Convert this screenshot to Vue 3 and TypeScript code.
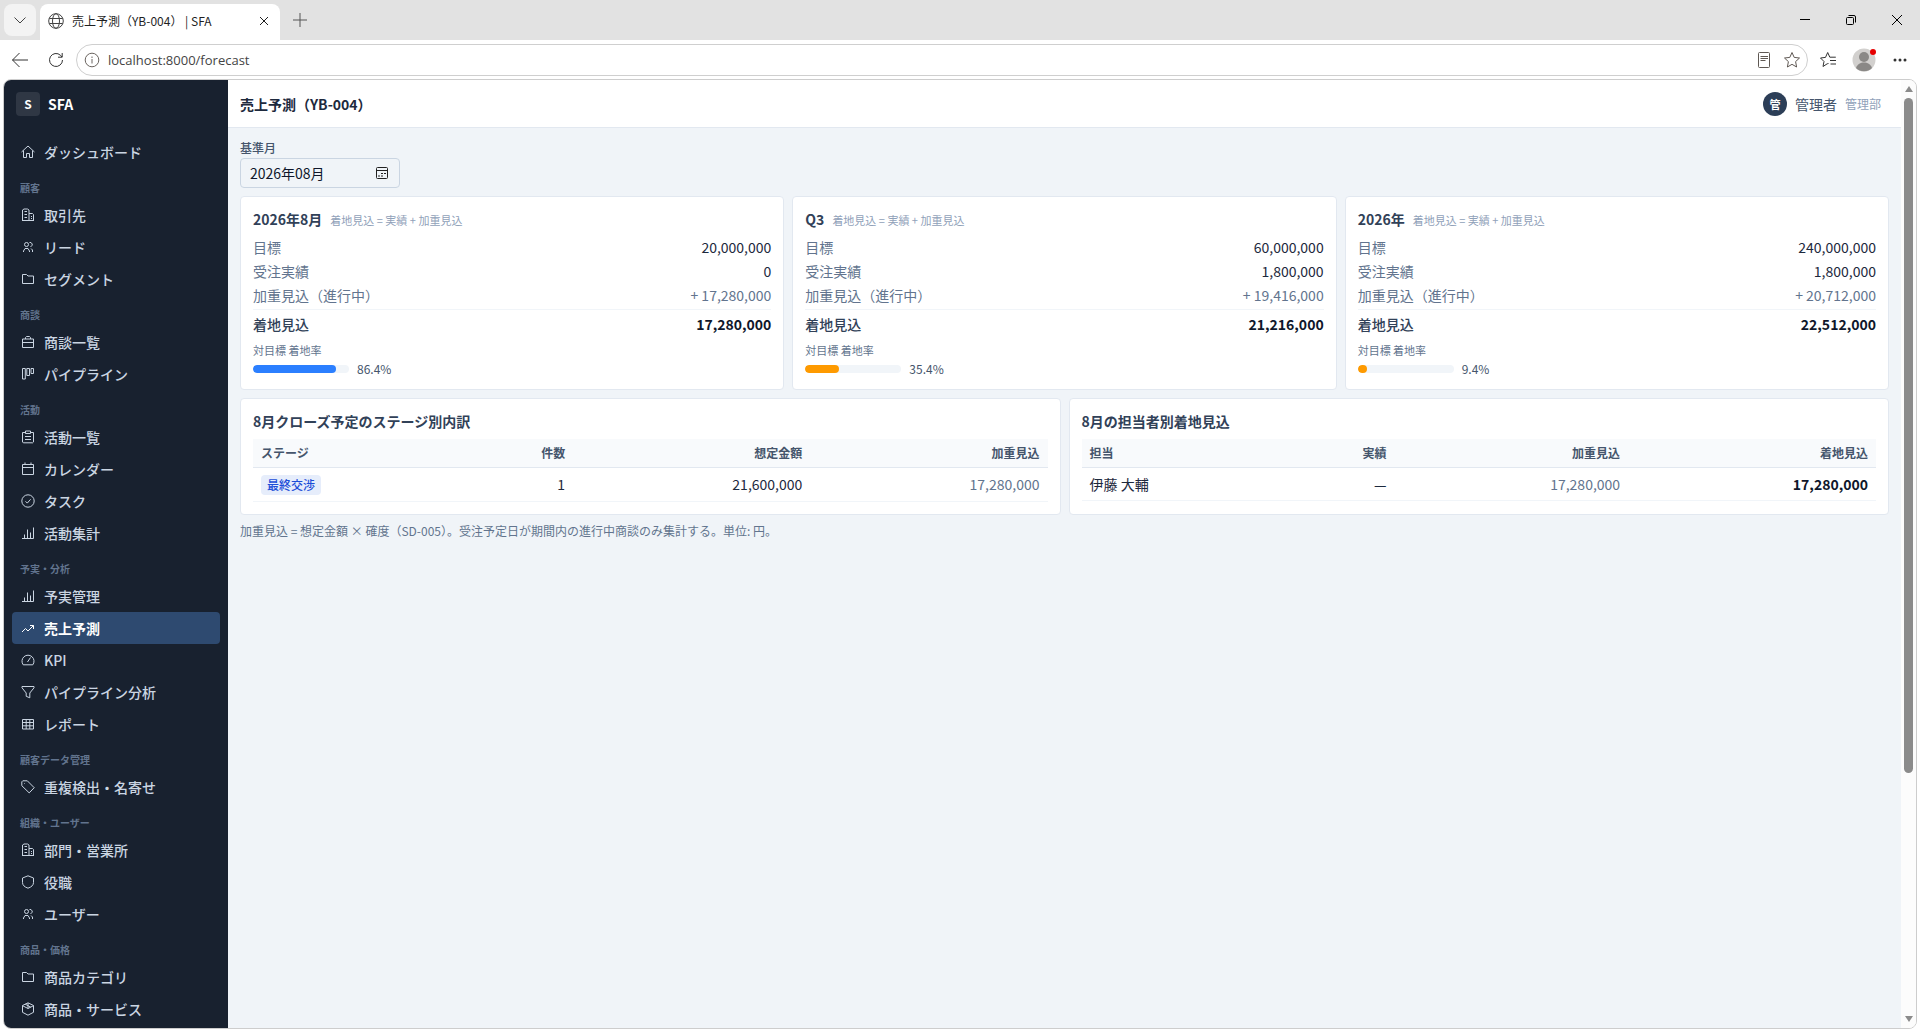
<script setup lang="ts">
import { ref } from 'vue'

type IconName =
  | 'home' | 'building' | 'users' | 'folder' | 'briefcase' | 'kanban' | 'clipboard' | 'calendar'
  | 'check' | 'chart' | 'trend' | 'gauge' | 'funnel' | 'table' | 'tag' | 'shield' | 'cube'

interface NavItem { label: string; icon: IconName; active?: boolean }
interface NavGroup { title?: string; items: NavItem[] }
interface Period {
  name: string
  target: string
  actual: string
  weighted: string
  landing: string
  rate: number
  tone: 'blue' | 'amber'
}

const icons: Record<IconName, string> = {
  home: 'M1.5 8 8 2l6.500 6M3.500 6.500v7h3V9.500h3v4h3v-7',
  building: 'M2.500 13.500V3L4 2h3.500L9 3v10.500M9 6.500h3.500l1 1v6M2 13.500h12M4.500 4.500H7M4.500 7.500H7M4.500 10.500H7M11 9.500h1M11 11.500h1',
  users: 'M6.500 7.500a2 2 0 1 0 0-4 2 2 0 0 0 0 4ZM3.500 13v-1l1.500-2.500h3L9.500 12v1M9.500 3.500h1.500l1.200 1.500v1.200L10.500 8M11 9.500l1.500 1.500v2',
  folder: 'M2.500 12.500v-9h4L8 5h5.500v7.500z',
  briefcase: 'M2.500 5h11v8.500h-11zM5.500 5V3.500l1-1h3l1 1V5M2.500 8.500h11',
  kanban: 'M2.500 2.500h2.800v10.500H2.500zM6.800 2.500h2.700v7H6.800zM11 2.500h2.500v5H11z',
  clipboard: 'M5.500 3.500h-3V13l.8.800h9.400l.8-.8V3.500h-3M5.500 2h5v2.500h-5zM5 7.500h6M5 10.500h6',
  calendar: 'M2.500 3.500h11v10h-11zM2.500 6.500h11M5 1.500v2M11 1.500v2',
  check: 'M14.200 8A6.200 6.200 0 1 1 1.800 8a6.200 6.200 0 0 1 12.400 0ZM5.500 8.300l1.800 1.800 3.300-3.800',
  chart: 'M2 13.500h11.500V2.500M4.500 13.500v-4M7.500 13.500v-9M10.500 13.500v-6',
  trend: 'M2 12 5.500 8.500l2.500 2.500 5.500-5.500M10 5.500h3.500V9',
  gauge: 'M3.200 12.800A6 6 0 1 1 12.800 12.800zM7.500 10l3-4.500',
  funnel: 'M2 2.500h12v1.300L9.800 9v4.800l-3.600-1.500V9L2 3.800z',
  table: 'M2.500 3.500h11v9.500h-11zM2.500 6.500h11M2.500 9.800h11M6.200 3.500V13M9.800 3.500V13',
  tag: 'M1.800 2.800 2.800 1.800h4.500l6.900 6.900-5 5.200L1.800 6.700zM4.300 4.500h.600',
  shield: 'M8 1.800 13.500 4v4.500c0 2.700-2 4.500-5.500 5.700-3.500-1.200-5.500-3-5.500-5.700V4z',
  cube: 'M8 1.800 13.500 4.500v6.800L8 14.200l-5.500-2.900V4.500zM2.500 4.700 8 7.500l5.500-2.800M8 2v5.500M5.200 3.200l5.500 2.900',
}

const navGroups: NavGroup[] = [
  { items: [{ label: 'ダッシュボード', icon: 'home' }] },
  {
    title: '顧客',
    items: [
      { label: '取引先', icon: 'building' },
      { label: 'リード', icon: 'users' },
      { label: 'セグメント', icon: 'folder' },
    ],
  },
  {
    title: '商談',
    items: [
      { label: '商談一覧', icon: 'briefcase' },
      { label: 'パイプライン', icon: 'kanban' },
    ],
  },
  {
    title: '活動',
    items: [
      { label: '活動一覧', icon: 'clipboard' },
      { label: 'カレンダー', icon: 'calendar' },
      { label: 'タスク', icon: 'check' },
      { label: '活動集計', icon: 'chart' },
    ],
  },
  {
    title: '予実・分析',
    items: [
      { label: '予実管理', icon: 'chart' },
      { label: '売上予測', icon: 'trend', active: true },
      { label: 'KPI', icon: 'gauge' },
      { label: 'パイプライン分析', icon: 'funnel' },
      { label: 'レポート', icon: 'table' },
    ],
  },
  { title: '顧客データ管理', items: [{ label: '重複検出・名寄せ', icon: 'tag' }] },
  {
    title: '組織・ユーザー',
    items: [
      { label: '部門・営業所', icon: 'building' },
      { label: '役職', icon: 'shield' },
      { label: 'ユーザー', icon: 'users' },
    ],
  },
  {
    title: '商品・価格',
    items: [
      { label: '商品カテゴリ', icon: 'folder' },
      { label: '商品・サービス', icon: 'cube' },
    ],
  },
]

const periods: Period[] = [
  { name: '2026年8月', target: '20,000,000', actual: '0', weighted: '17,280,000', landing: '17,280,000', rate: 86.4, tone: 'blue' },
  { name: 'Q3', target: '60,000,000', actual: '1,800,000', weighted: '19,416,000', landing: '21,216,000', rate: 35.4, tone: 'amber' },
  { name: '2026年', target: '240,000,000', actual: '1,800,000', weighted: '20,712,000', landing: '22,512,000', rate: 9.4, tone: 'amber' },
]

const address = ref('localhost:8000/forecast')
const baseMonth = ref('2026年08月')
</script>

<template>
  <div class="browser">
    <div class="tabstrip">
      <button class="tab-search" aria-label="タブを検索">
        <svg width="14" height="14" viewBox="0 0 14 14"><path d="M1.500 4.500 7 10l5.500-5.500" /></svg>
      </button>
      <div class="tab">
        <svg class="globe" width="16" height="16" viewBox="0 0 16 16">
          <circle cx="8" cy="8" r="7.300" />
          <ellipse cx="8" cy="8" rx="3.500" ry="7.300" />
          <path d="M1.300 5.500h13.400M1.300 10.500h13.400" />
        </svg>
        <span class="tab-title">売上予測（YB-004） | SFA</span>
        <button class="tab-close" aria-label="タブを閉じる">
          <svg width="10" height="10" viewBox="0 0 10 10"><path d="m1 1 8 8M9 1 1 9" /></svg>
        </button>
      </div>
      <button class="new-tab" aria-label="新しいタブ">
        <svg width="16" height="16" viewBox="0 0 16 16"><path d="M8 1v14M1 8h14" /></svg>
      </button>
      <div class="window-controls">
        <button aria-label="最小化"><svg width="12" height="12" viewBox="0 0 12 12"><path d="M1 5.500h10" /></svg></button>
        <button aria-label="元に戻す">
          <svg width="12" height="12" viewBox="0 0 12 12"><rect x="1.500" y="3.500" width="7" height="7" rx="1" /><path d="M3.500 1.500h5.500a1.500 1.500 0 0 1 1.500 1.500v5.500" /></svg>
        </button>
        <button aria-label="閉じる"><svg width="12" height="12" viewBox="0 0 12 12"><path d="m1 1 10 10M11 1 1 11" /></svg></button>
      </div>
    </div>

    <div class="toolbar">
      <button aria-label="戻る"><svg width="18" height="16" viewBox="0 0 18 16"><path d="M8.500 1 1.500 8l7 7M1.500 8H17" /></svg></button>
      <button aria-label="更新">
        <svg width="16" height="16" viewBox="0 0 16 16"><path d="M14.500 8a6.500 6.500 0 1 1-2-4.700L14 5M14.200 1v4.200H10" /></svg>
      </button>
      <div class="address">
        <svg class="info" width="16" height="16" viewBox="0 0 16 16"><circle cx="8" cy="8" r="6.800" /><path d="M8 7v4.500M8 4.500V6" /></svg>
        <input v-model="address" class="address-input" type="text" aria-label="アドレス" />
        <button aria-label="リーダー">
          <svg width="14" height="18" viewBox="0 0 14 18"><rect x="1.500" y="1.500" width="11" height="15" rx="1" /><path d="M3.500 5.500h7.500M3.500 7.500h7.500M3.500 9.500h5" /></svg>
        </button>
        <button aria-label="お気に入りに追加">
          <svg width="18" height="18" viewBox="0 0 18 18"><path d="m9 1.500 2.200 4.900 5.300.6-3.900 3.600 1 5.400L9 13.300 4.400 16l1-5.400L1.500 7l5.300-.6z" /></svg>
        </button>
      </div>
      <button aria-label="お気に入り">
        <svg width="18" height="18" viewBox="0 0 18 18"><path d="M9.500 12.500 8.200 12.800 4 15.500l1-5L1.500 7l5-.6L8.700 1.500l2.100 4.700h6M11 9.500h6M11.500 13h5.500" /></svg>
      </button>
      <button class="profile" aria-label="プロファイル">
        <svg width="24" height="24" viewBox="0 0 24 24">
          <circle cx="12" cy="12" r="11.500" class="face-bg" />
          <circle cx="12" cy="9" r="5" class="face" />
          <path d="M4 20c1.500-4 4.500-5.500 8-5.500s6.500 1.500 8 5.500a11.500 11.500 0 0 1-16 0Z" class="face" />
        </svg>
        <span class="profile-dot"></span>
      </button>
      <button aria-label="設定など">
        <svg width="16" height="16" viewBox="0 0 16 16" class="dots"><circle cx="3" cy="8" r="1.500" /><circle cx="8" cy="8" r="1.500" /><circle cx="13" cy="8" r="1.500" /></svg>
      </button>
    </div>

    <div class="viewport">
      <aside class="sidebar">
        <div class="brand"><span class="brand-mark">S</span><span>SFA</span></div>
        <nav>
          <template v-for="(group, gi) in navGroups" :key="gi">
            <h2 v-if="group.title" class="nav-title">{{ group.title }}</h2>
            <a
              v-for="item in group.items"
              :key="item.label"
              href="#"
              class="nav-item"
              :class="{ active: item.active }"
            >
              <svg width="16" height="16" viewBox="0 0 16 16"><path :d="icons[item.icon]" /></svg>
              <span>{{ item.label }}</span>
            </a>
          </template>
        </nav>
      </aside>

      <div class="page">
        <header class="topbar">
          <h1>売上予測（YB-004）</h1>
          <div class="user">
            <span class="avatar">管</span>
            <span class="user-name">管理者</span>
            <span class="user-dept">管理部</span>
          </div>
        </header>

        <main>
          <div class="field">
            <label for="base-month">基準月</label>
            <div class="month">
              <input id="base-month" v-model="baseMonth" type="text" />
              <button aria-label="月を選択">
                <svg width="14" height="14" viewBox="0 0 14 14">
                  <rect x="1.500" y="1.500" width="11" height="11" rx="1" />
                  <path d="M1.500 4.500h11M6 7.500h2M9 7.500h2M3 10h2M6 10h2" />
                </svg>
              </button>
            </div>
          </div>

          <div class="periods">
            <section v-for="p in periods" :key="p.name" class="card">
              <h2>{{ p.name }}<small>着地見込 = 実績 + 加重見込</small></h2>
              <dl>
                <div><dt>目標</dt><dd>{{ p.target }}</dd></div>
                <div><dt>受注実績</dt><dd>{{ p.actual }}</dd></div>
                <div class="weighted"><dt>加重見込（進行中）</dt><dd>+ {{ p.weighted }}</dd></div>
                <div class="landing"><dt>着地見込</dt><dd>{{ p.landing }}</dd></div>
              </dl>
              <p class="rate-label">対目標 着地率</p>
              <div class="rate">
                <span class="track"><span class="fill" :class="p.tone" :style="{ width: p.rate + '%' }"></span></span>
                <span>{{ p.rate }}%</span>
              </div>
            </section>
          </div>

          <div class="breakdowns">
            <section class="card">
              <h2>8月クローズ予定のステージ別内訳</h2>
              <table>
                <thead>
                  <tr><th>ステージ</th><th>件数</th><th>想定金額</th><th>加重見込</th></tr>
                </thead>
                <tbody>
                  <tr>
                    <td><span class="badge">最終交渉</span></td>
                    <td>1</td>
                    <td>21,600,000</td>
                    <td class="muted">17,280,000</td>
                  </tr>
                </tbody>
              </table>
            </section>
            <section class="card">
              <h2>8月の担当者別着地見込</h2>
              <table>
                <thead>
                  <tr><th>担当</th><th>実績</th><th>加重見込</th><th>着地見込</th></tr>
                </thead>
                <tbody>
                  <tr>
                    <td>伊藤 大輔</td>
                    <td>—</td>
                    <td class="muted">17,280,000</td>
                    <td class="strong">17,280,000</td>
                  </tr>
                </tbody>
              </table>
            </section>
          </div>

          <p class="note">加重見込 = 想定金額 × 確度（SD-005）。受注予定日が期間内の進行中商談のみ集計する。単位: 円。</p>
        </main>
      </div>

      <div class="scrollbar" aria-hidden="true">
        <svg width="10" height="8" viewBox="0 0 10 8"><path d="M5 1 9 7H1z" /></svg>
        <div class="scroll-track"><div class="thumb"></div></div>
        <svg width="10" height="8" viewBox="0 0 10 8"><path d="M5 7 9 1H1z" /></svg>
      </div>
    </div>
  </div>
</template>

<style>
body {
  margin: 0;
  background: #fff;
}
</style>

<style scoped>
* {
  box-sizing: border-box;
}

.browser {
  display: flex;
  flex-direction: column;
  height: 100vh;
  background: #fff;
  color: #1d293d;
  font-family: 'Noto Sans CJK JP', 'Noto Sans', sans-serif;
  font-size: 14px;
  line-height: 20px;
}

h1,
h2,
p,
dl,
dd {
  margin: 0;
}

button {
  display: flex;
  align-items: center;
  justify-content: center;
  padding: 0;
  border: 0;
  background: none;
  color: inherit;
}

svg {
  display: block;
  flex: none;
  fill: none;
  stroke: currentColor;
}

/* Tab strip */
.tabstrip {
  display: flex;
  align-items: center;
  height: 40px;
  flex: none;
  padding-left: 4px;
  background: #e2e2e2;
  color: #1f1f1f;
}

.tab-search {
  width: 32px;
  height: 32px;
  margin-right: 4px;
  border-radius: 8px;
  background: #f3f3f3;
  color: #444;
}

.tab {
  display: flex;
  align-items: center;
  align-self: flex-end;
  gap: 8px;
  width: 240px;
  height: 36px;
  padding: 0 11px 3px 8px;
  border-radius: 8px 8px 0 0;
  background: #fff;
  font-size: 12px;
}

.globe {
  color: #444;
}

.tab-title {
  flex: 1;
  white-space: nowrap;
  overflow: hidden;
}

.new-tab {
  width: 40px;
  height: 32px;
  color: #555;
}

.window-controls {
  display: flex;
  margin-left: auto;
  color: #000;
}

.window-controls button {
  width: 46px;
  height: 40px;
}

/* Toolbar */
.toolbar {
  display: flex;
  align-items: center;
  flex: none;
  height: 39px;
  padding: 0 2px;
  color: #333;
}

.toolbar > button {
  width: 36px;
  height: 32px;
}

.address {
  display: flex;
  align-items: center;
  flex: 1;
  height: 32px;
  margin: 0 2px;
  padding: 0 1px 0 7px;
  border: 1px solid #cfcfcf;
  border-radius: 16px;
}

.address button {
  width: 28px;
  height: 28px;
  color: #5f5853;
}

.info {
  color: #6b6560;
}

.address-input {
  flex: 1;
  min-width: 0;
  padding: 0;
  margin-left: 8px;
  border: 0;
  outline: 0;
  background: none;
  color: #444;
  font-family: 'Open Sans', 'Noto Sans', sans-serif;
  font-size: 13px;
}

.profile {
  position: relative;
}

.face-bg {
  fill: #d2d0ce;
  stroke: none;
}

.face {
  fill: #8a8886;
  stroke: none;
}

.profile-dot {
  position: absolute;
  top: 5px;
  right: 6px;
  width: 6px;
  height: 6px;
  border-radius: 50%;
  background: #e60000;
}

.dots {
  fill: currentColor;
  stroke: none;
}

/* Page frame */
.viewport {
  display: flex;
  flex: 1;
  min-height: 0;
  margin: 0 3px 3px;
  border: 1px solid #cdcdcd;
  border-radius: 8px;
  overflow: hidden;
}

.sidebar {
  flex: none;
  width: 224px;
  overflow: hidden;
  background: #18212f;
  color: #cad5e2;
}

.brand {
  display: flex;
  align-items: center;
  gap: 8px;
  height: 48px;
  padding: 0 12px;
  color: #fff;
  font-weight: 700;
}

.brand-mark {
  width: 24px;
  height: 24px;
  border-radius: 4px;
  background: #2f3744;
  font-size: 12px;
  line-height: 24px;
  text-align: center;
}

nav {
  padding: 8px 8px 0;
}

.nav-title {
  padding: 12px 8px 4px;
  color: #62748e;
  font-size: 10px;
  font-weight: 700;
  line-height: 15px;
}

.nav-item {
  display: flex;
  align-items: center;
  gap: 8px;
  height: 32px;
  padding: 0 8px;
  border-radius: 4px;
  color: inherit;
  font-weight: 500;
  text-decoration: none;
}

.nav-item.active {
  background: #2e4a70;
  color: #fff;
  font-weight: 700;
}

.page {
  flex: 1;
  min-width: 0;
  background: #f0f4f8;
}

.topbar {
  display: flex;
  align-items: center;
  justify-content: space-between;
  height: 48px;
  padding: 0 20px 0 12px;
  border-bottom: 1px solid #e2e8f0;
  background: #fff;
}

h1 {
  font-size: 14px;
  font-weight: 700;
}

.user {
  display: flex;
  align-items: center;
  gap: 8px;
}

.avatar {
  width: 24px;
  height: 24px;
  border-radius: 50%;
  background: #2c3e57;
  color: #fff;
  font-size: 11px;
  font-weight: 700;
  line-height: 24px;
  text-align: center;
}

.user-name {
  color: #45556c;
}

.user-dept {
  color: #90a1b9;
  font-size: 12px;
}

main {
  display: flex;
  flex-direction: column;
  gap: 8px;
  padding: 12px;
}

.field {
  display: flex;
  flex-direction: column;
  gap: 2px;
}

.field label {
  color: #45556c;
  font-size: 12px;
  font-weight: 500;
  line-height: 16px;
}

.month {
  display: flex;
  align-items: center;
  width: 160px;
  height: 30px;
  padding: 0 10px 0 9px;
  border: 1px solid #cad5e2;
  border-radius: 4px;
}

.month input {
  flex: 1;
  min-width: 0;
  padding: 0;
  border: 0;
  outline: 0;
  background: none;
  color: #0f172b;
  font: inherit;
}

.month button {
  color: #222;
}

/* Cards */
.periods {
  display: grid;
  grid-template-columns: repeat(3, 1fr);
  gap: 8px;
}

.breakdowns {
  display: grid;
  grid-template-columns: repeat(2, 1fr);
  gap: 8px;
}

.card {
  padding: 12px;
  border: 1px solid #e2e8f0;
  border-radius: 4px;
  background: #fff;
}

.card h2 {
  height: 20px;
  margin-bottom: 8px;
  color: #314158;
  font-size: 14px;
  font-weight: 700;
}

.card small {
  margin-left: 8px;
  color: #90a1b9;
  font-size: 11px;
  font-weight: 400;
}

dl {
  display: flex;
  flex-direction: column;
  gap: 4px;
}

dl div {
  display: flex;
  justify-content: space-between;
}

dt,
.weighted dd {
  color: #62748e;
}

.landing {
  padding-top: 4px;
  border-top: 1px solid #f1f5f9;
  font-weight: 700;
}

.landing dt {
  color: #314158;
  font-weight: 500;
}

.landing dd {
  color: #0f172b;
}

.rate-label {
  margin: 8px 0 2px;
  color: #62748e;
  font-size: 11px;
  line-height: 17px;
}

.rate {
  display: flex;
  align-items: center;
  gap: 8px;
  color: #45556c;
  font-size: 12px;
  line-height: 16px;
}

.track {
  width: 96px;
  height: 8px;
  border-radius: 4px;
  background: #f1f5f9;
  overflow: hidden;
}

.fill {
  display: block;
  height: 100%;
  border-radius: 4px;
}

.blue {
  background: #2b7fff;
}

.amber {
  background: #fe9a00;
}

table {
  width: 100%;
  border-collapse: separate;
  border-spacing: 0;
}

th,
td {
  padding: 6px 8px;
  text-align: right;
  vertical-align: top;
}

th:first-child,
td:first-child {
  text-align: left;
}

th {
  border-bottom: 1px solid #e2e8f0;
  background: #f8fafc;
  color: #45556c;
  font-size: 12px;
  font-weight: 700;
  line-height: 16px;
}

td {
  border-bottom: 1px solid #f1f5f9;
}

.muted {
  color: #62748e;
}

.strong {
  color: #0f172b;
  font-weight: 700;
}

.badge {
  display: inline-block;
  padding: 2px 6px;
  border-radius: 4px;
  background: #e6edfb;
  color: #1d4ed8;
  font-size: 12px;
  font-weight: 500;
  line-height: 16px;
}

.note {
  color: #62748e;
  font-size: 12px;
  line-height: 16px;
}

/* Scrollbar */
.scrollbar {
  display: flex;
  flex-direction: column;
  align-items: center;
  flex: none;
  width: 15px;
  padding: 5px 0;
  background: #fcfcfc;
}

.scrollbar svg {
  fill: #8b8b8b;
  stroke: none;
}

.scroll-track {
  flex: 1;
  width: 9px;
  padding: 5px 0;
}

.thumb {
  height: 74%;
  border-radius: 5px;
  background: #8b8b8b;
}
</style>
